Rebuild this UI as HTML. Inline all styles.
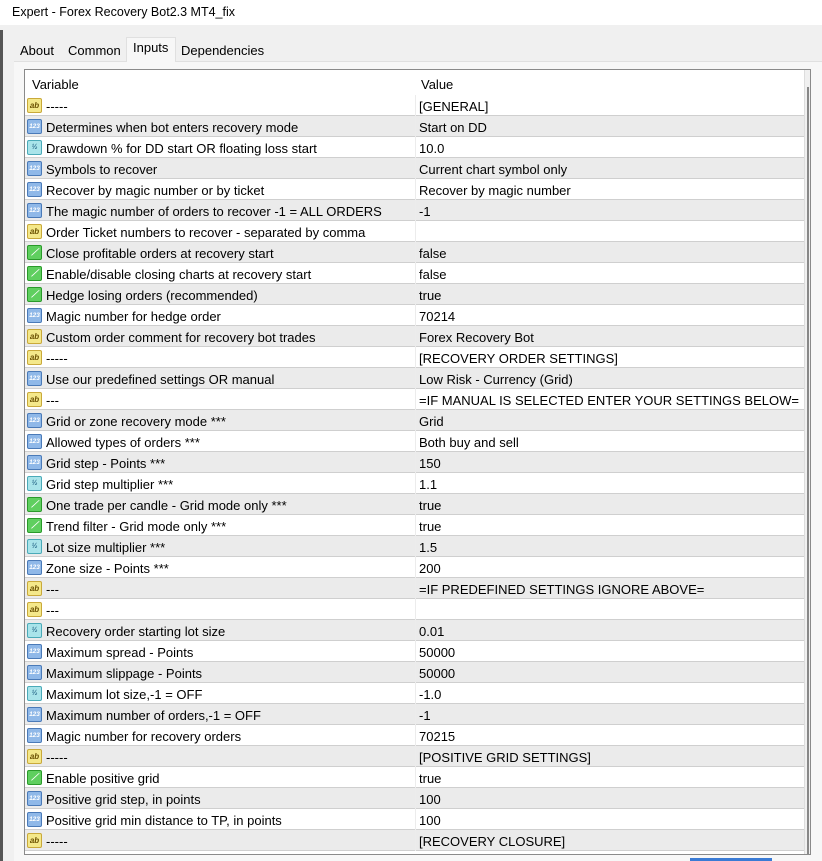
<!DOCTYPE html>
<html><head><meta charset="utf-8"><style>
*{margin:0;padding:0;box-sizing:border-box}
body{width:822px;height:861px;overflow:hidden;background:#f0f0f0;font-family:"Liberation Sans","Noto Sans CJK SC",sans-serif;font-size:13px;color:#000;position:relative}
.title{position:absolute;left:0;top:0;width:822px;height:25px;background:#fff;padding:5px 0 0 12px;font-size:12.5px}
.tabs{position:absolute;top:37px;left:16px;height:25px}
.tab{position:absolute;top:2px;height:22px;padding-top:4px;background:#f0f0f0;font-size:13px}
.tab.sel{top:0;height:25px;background:#f7f7f7;border:1px solid #e0e0e0;border-bottom:none;padding-top:2px}
.panel{position:absolute;left:14px;top:61px;width:808px;height:800px;background:#f7f7f7;border-top:1px solid #e0e0e0}
.grid{position:absolute;left:24px;top:69px;width:787px;height:786px;border:1px solid #8a8a8a;background:#fff;overflow:hidden}
.hdr{position:absolute;left:0;top:0;width:780px;height:25px;background:#fff}
.hdr span{position:absolute;top:7px}
.sb{position:absolute;right:0;top:0;width:6px;height:786px;background:#f0f0f0;border-left:1px solid #ddd}
.sb:after{content:"";position:absolute;left:2px;top:17px;width:2px;height:770px;background:#888}
.row{position:absolute;left:0;width:780px;height:21px;border-bottom:1px solid #cfcfcf}
.row.g{background:#ebebeb}
.row .v{position:absolute;left:21px;top:4px;white-space:nowrap}
.row .w{position:absolute;left:394px;top:4px;white-space:nowrap}
.row .sep{position:absolute;left:390px;top:0;width:1px;height:21px;background:#ececec}
.ic{position:absolute;left:2px;top:3px;width:15px;height:15px;border-radius:2px;font-size:8px;line-height:13px;text-align:center;font-weight:bold}
.ab{background:#f4e88a;border:1px solid #c9a93a;color:#6a5000}
.n{background:#8fb8e8;border:1px solid #4a7ab8;color:#fff;font-size:6.5px}
.f{background:#a9e4ea;border:1px solid #4aaab8;color:#2a6a8a;font-size:7px}
.b{background:#5fcf5f;border:1px solid #2a9a2a;color:#fff;font-size:9px}
</style></head><body>
<div class="title">Expert - Forex Recovery Bot2.3 MT4_fix</div>
<div class="panel"></div>
<div style="position:absolute;left:0;top:30px;width:3px;height:831px;background:#555"></div>
<div class="tabs">
<div class="tab" style="left:4px">About</div>
<div class="tab" style="left:52px">Common</div>
<div class="tab sel" style="left:110px;width:50px;padding-left:6px">Inputs</div>
<div class="tab" style="left:165px">Dependencies</div>
</div>
<div class="grid">
<div class="hdr"><span style="left:7px">Variable</span><span style="left:396px">Value</span></div>
<div class="row" style="top:25px"><i class="ic ab">ab</i><span class="v">-----</span><span class="sep"></span><span class="w">[GENERAL]</span></div>
<div class="row g" style="top:46px"><i class="ic n">123</i><span class="v">Determines when bot enters recovery mode</span><span class="sep"></span><span class="w">Start on DD</span></div>
<div class="row" style="top:67px"><i class="ic f">½</i><span class="v">Drawdown % for DD start OR floating loss start</span><span class="sep"></span><span class="w">10.0</span></div>
<div class="row g" style="top:88px"><i class="ic n">123</i><span class="v">Symbols to recover</span><span class="sep"></span><span class="w">Current chart symbol only</span></div>
<div class="row" style="top:109px"><i class="ic n">123</i><span class="v">Recover by magic number or by ticket</span><span class="sep"></span><span class="w">Recover by magic number</span></div>
<div class="row g" style="top:130px"><i class="ic n">123</i><span class="v">The magic number of orders to recover -1 = ALL ORDERS</span><span class="sep"></span><span class="w">-1</span></div>
<div class="row" style="top:151px"><i class="ic ab">ab</i><span class="v">Order Ticket numbers to recover - separated by comma</span><span class="sep"></span><span class="w"></span></div>
<div class="row g" style="top:172px"><i class="ic b">⟋</i><span class="v">Close profitable orders at recovery start</span><span class="sep"></span><span class="w">false</span></div>
<div class="row" style="top:193px"><i class="ic b">⟋</i><span class="v">Enable/disable closing charts at recovery start</span><span class="sep"></span><span class="w">false</span></div>
<div class="row g" style="top:214px"><i class="ic b">⟋</i><span class="v">Hedge losing orders (recommended)</span><span class="sep"></span><span class="w">true</span></div>
<div class="row" style="top:235px"><i class="ic n">123</i><span class="v">Magic number for hedge order</span><span class="sep"></span><span class="w">70214</span></div>
<div class="row g" style="top:256px"><i class="ic ab">ab</i><span class="v">Custom order comment for recovery bot trades</span><span class="sep"></span><span class="w">Forex Recovery Bot</span></div>
<div class="row" style="top:277px"><i class="ic ab">ab</i><span class="v">-----</span><span class="sep"></span><span class="w">[RECOVERY ORDER SETTINGS]</span></div>
<div class="row g" style="top:298px"><i class="ic n">123</i><span class="v">Use our predefined settings OR manual</span><span class="sep"></span><span class="w">Low Risk - Currency (Grid)</span></div>
<div class="row" style="top:319px"><i class="ic ab">ab</i><span class="v">---</span><span class="sep"></span><span class="w">=IF MANUAL IS SELECTED ENTER YOUR SETTINGS BELOW=</span></div>
<div class="row g" style="top:340px"><i class="ic n">123</i><span class="v">Grid or zone recovery mode ***</span><span class="sep"></span><span class="w">Grid</span></div>
<div class="row" style="top:361px"><i class="ic n">123</i><span class="v">Allowed types of orders ***</span><span class="sep"></span><span class="w">Both buy and sell</span></div>
<div class="row g" style="top:382px"><i class="ic n">123</i><span class="v">Grid step - Points ***</span><span class="sep"></span><span class="w">150</span></div>
<div class="row" style="top:403px"><i class="ic f">½</i><span class="v">Grid step multiplier ***</span><span class="sep"></span><span class="w">1.1</span></div>
<div class="row g" style="top:424px"><i class="ic b">⟋</i><span class="v">One trade per candle - Grid mode only ***</span><span class="sep"></span><span class="w">true</span></div>
<div class="row" style="top:445px"><i class="ic b">⟋</i><span class="v">Trend filter - Grid mode only ***</span><span class="sep"></span><span class="w">true</span></div>
<div class="row g" style="top:466px"><i class="ic f">½</i><span class="v">Lot size multiplier ***</span><span class="sep"></span><span class="w">1.5</span></div>
<div class="row" style="top:487px"><i class="ic n">123</i><span class="v">Zone size - Points ***</span><span class="sep"></span><span class="w">200</span></div>
<div class="row g" style="top:508px"><i class="ic ab">ab</i><span class="v">---</span><span class="sep"></span><span class="w">=IF PREDEFINED SETTINGS IGNORE ABOVE=</span></div>
<div class="row" style="top:529px"><i class="ic ab">ab</i><span class="v">---</span><span class="sep"></span><span class="w"></span></div>
<div class="row g" style="top:550px"><i class="ic f">½</i><span class="v">Recovery order starting lot size</span><span class="sep"></span><span class="w">0.01</span></div>
<div class="row" style="top:571px"><i class="ic n">123</i><span class="v">Maximum spread - Points</span><span class="sep"></span><span class="w">50000</span></div>
<div class="row g" style="top:592px"><i class="ic n">123</i><span class="v">Maximum slippage - Points</span><span class="sep"></span><span class="w">50000</span></div>
<div class="row" style="top:613px"><i class="ic f">½</i><span class="v">Maximum lot size,-1 = OFF</span><span class="sep"></span><span class="w">-1.0</span></div>
<div class="row g" style="top:634px"><i class="ic n">123</i><span class="v">Maximum number of orders,-1 = OFF</span><span class="sep"></span><span class="w">-1</span></div>
<div class="row" style="top:655px"><i class="ic n">123</i><span class="v">Magic number for recovery orders</span><span class="sep"></span><span class="w">70215</span></div>
<div class="row g" style="top:676px"><i class="ic ab">ab</i><span class="v">-----</span><span class="sep"></span><span class="w">[POSITIVE GRID SETTINGS]</span></div>
<div class="row" style="top:697px"><i class="ic b">⟋</i><span class="v">Enable positive grid</span><span class="sep"></span><span class="w">true</span></div>
<div class="row g" style="top:718px"><i class="ic n">123</i><span class="v">Positive grid step, in points</span><span class="sep"></span><span class="w">100</span></div>
<div class="row" style="top:739px"><i class="ic n">123</i><span class="v">Positive grid min distance to TP, in points</span><span class="sep"></span><span class="w">100</span></div>
<div class="row g" style="top:760px"><i class="ic ab">ab</i><span class="v">-----</span><span class="sep"></span><span class="w">[RECOVERY CLOSURE]</span></div>
<div class="sb"></div>
</div>
<div style="position:absolute;left:690px;top:858px;width:82px;height:3px;background:#3a7bd5"></div>
</body></html>
